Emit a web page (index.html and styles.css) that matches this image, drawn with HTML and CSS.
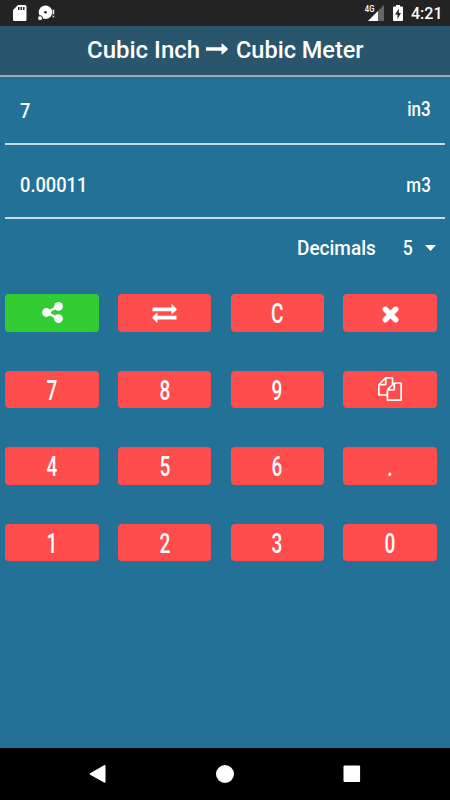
FILE: index.html
```html
<!DOCTYPE html>
<html lang="en">
<head>
  <meta charset="UTF-8" />
  <meta name="viewport" content="width=device-width, initial-scale=1.0" />
  <title>Cubic Inch to Cubic Meter</title>
  <link rel="stylesheet" href="styles.css">
</head>
<body>
  <div class="status-bar">
    <svg class="sd-icon" width="14" height="17" viewBox="0 0 14 17">
      <path fill="#fff" fill-rule="evenodd" d="M5 0h7q1.500 0 1.500 1.500v13q0 1.500-1.500 1.500H1.500Q0 16 0 14.500V5zM5 2v3h1.500V2zm2.500 0v3H9V2zM10 2v3h1.500V2z"/>
    </svg>
    <svg class="disc-icon" width="18" height="17" viewBox="0 0 18 17">
      <circle cx="7.500" cy="7.300" r="6.800" fill="#fff"/>
      <circle cx="7.500" cy="7.300" r="1.300" fill="#232323"/>
      <circle cx="2" cy="13.200" r="2.500" fill="#fff" stroke="#232323" stroke-width="1"/>
      <path fill="#fff" stroke="#232323" stroke-width=".500" d="M14.400 4.500h1.900v5h-1.900zM14.400 10.500h1.900v1.900h-1.900z"/>
    </svg>
    <div class="status-right">
      <span class="network">4G</span>
      <svg class="signal-icon" width="16" height="16" viewBox="0 0 16 16">
        <path fill="#666" d="M16 0v16H0z"/>
        <path fill="#fff" d="M10 6v10H0z"/>
      </svg>
      <svg class="battery-icon" width="10" height="16" viewBox="0 0 10 16">
        <path fill="#fff" d="M3 0h4v1.500h2q1 0 1 1V15q0 1-1 1H1q-1 0-1-1V2.500q0-1 1-1h2z"/>
        <path fill="#232323" d="M6 3.500L2 9.500h2.500V14L8 8H5.700z"/>
      </svg>
      <span class="clock">4:21</span>
    </div>
  </div>

  <header class="title-bar">
    <span class="title-from">Cubic Inch</span>
    <svg class="title-arrow" width="22" height="12" viewBox="0 0 22 12">
      <path fill="#fff" d="M0 4.300h15.500V1.200q0-1.200 1-.400l5 4.500q.700.700 0 1.400l-5 4.500q-1 .800-1-.400V7.700H0z"/>
    </svg>
    <span class="title-to">Cubic Meter</span>
  </header>

  <main>
    <div class="field field-from">
      <span class="value">7</span>
      <span class="unit unit-from">in3</span>
    </div>
    <div class="field field-to">
      <span class="value">0.00011</span>
      <span class="unit unit-to">m3</span>
    </div>

    <div class="decimals">
      <span class="decimals-label">Decimals</span>
      <span class="decimals-value">5</span>
      <svg width="11" height="6" viewBox="0 0 11 6"><path fill="#fff" d="M0 0h11L5.500 6z"/></svg>
    </div>

    <div class="keypad">
      <button class="key share" aria-label="Share">
        <svg width="21" height="21" viewBox="0 0 21 21">
          <path fill="none" stroke="#fff" stroke-width="2.600" d="M16.500 4.300l-12 6.200 12 6.200"/>
          <g fill="#fff"><circle cx="16.500" cy="4.400" r="4.400"/><circle cx="4.400" cy="10.500" r="4.400"/><circle cx="16.500" cy="16.600" r="4.400"/></g>
        </svg>
      </button>
      <button class="key" aria-label="Swap">
        <svg class="swap-icon" width="25" height="19" viewBox="0 0 25 19">
          <path fill="#fff" d="M.500 3.400h19V.800q0-.900.800-.300l4.200 4.200q.500.600 0 1.200l-4.200 4.200q-.800.600-.800-.300V7.300H.500zM24.500 11.700h-19V9.100q0-.900-.800-.300L.500 13q-.500.600 0 1.200l4.200 4.200q.800.600.800-.300v-2.500h19z"/>
        </svg>
      </button>
      <button class="key"><span>C</span></button>
      <button class="key" aria-label="Delete">
        <svg class="delete-icon" width="17" height="17" viewBox="0 0 17 17">
          <path stroke="#fff" stroke-width="5.500" stroke-linecap="round" d="M3.300 3.300l10.400 10.400M13.700 3.300L3.300 13.700"/>
        </svg>
      </button>
      <button class="key"><span>7</span></button>
      <button class="key"><span>8</span></button>
      <button class="key"><span>9</span></button>
      <button class="key" aria-label="Copy">
        <svg width="24" height="24" viewBox="0 0 1792 1792">
          <path fill="#fff" d="M1696 384q40 0 68 28t28 68v1216q0 40-28 68t-68 28h-960q-40 0-68-28t-28-68v-288h-544q-40 0-68-28t-28-68v-672q0-40 20-88t48-76l408-408q28-28 76-48t88-20h416q40 0 68 28t28 68v328q68-40 128-40h416zm-544 213l-299 299h299v-299zm-640-384l-299 299h299v-299zm196 647l316-316v-416h-384v416q0 40-28 68t-68 28h-416v640h512v-256q0-40 20-88t48-76zm956 804v-1152h-384v416q0 40-28 68t-68 28h-416v640h896z"/>
        </svg>
      </button>
      <button class="key"><span>4</span></button>
      <button class="key"><span>5</span></button>
      <button class="key"><span>6</span></button>
      <button class="key"><span>.</span></button>
      <button class="key"><span>1</span></button>
      <button class="key"><span>2</span></button>
      <button class="key"><span>3</span></button>
      <button class="key"><span>0</span></button>
    </div>
  </main>

  <nav class="nav-bar">
    <svg width="18" height="18" viewBox="0 0 18 18"><path fill="#fff" d="M15.500 0q1 0 1 1v16q0 1-1 .800L1.200 9.700q-1-.700 0-1.400z"/></svg>
    <svg width="18" height="18" viewBox="0 0 18 18"><circle cx="9" cy="9" r="9" fill="#fff"/></svg>
    <svg width="18" height="18" viewBox="0 0 18 18"><rect x=".500" y=".500" width="16.600" height="16.600" rx="1" fill="#fff"/></svg>
  </nav>
</body>
</html>
```

FILE: styles.css
```css
* {
  box-sizing: border-box;
}
body {
  margin: 0;
  height: 800px;
  display: flex;
  flex-direction: column;
  overflow: hidden;
  background-color: #237196;
  color: white;
  font-family: Roboto, sans-serif;
}
svg {
  display: block;
  flex: none;
}
.status-bar {
  height: 26px;
  display: flex;
  align-items: flex-start;
  padding: 5px 9px 0 13px;
  background-color: #232323;
}
.disc-icon {
  margin-left: 11px;
}
.status-right {
  display: flex;
  margin-left: auto;
}
.network {
  font-size: 9px;
  line-height: 9px;
  margin-right: -7px;
  z-index: 1;
  font-weight: 500;
  transform: scaleX(0.85);
}
.battery-icon {
  margin-left: 9px;
}
.clock {
  font-size: 16px;
  line-height: 18px;
  margin-left: 8px;
  width: 30px;
  font-weight: 500;
}
.title-bar {
  height: 51px;
  display: flex;
  align-items: center;
  padding: 0 0 2px 87px;
  background-color: #2a566d;
  border-bottom: 2px solid #9eabb2;
  font-size: 24px;
  font-weight: 500;
  white-space: nowrap;
}
.title-from {
  width: 112px;
}
.title-arrow {
  margin: -2px 8px 0 7px;
}
.title-to {
  transform: scaleX(0.98);
  transform-origin: left;
}
main {
  flex: 1;
}
.field {
  display: flex;
  align-items: center;
  justify-content: space-between;
  margin: 0 5px;
  padding: 0 14px 0 15px;
  border-bottom: 2px solid #c9dae2;
}
.field-from {
  height: 68px;
}
.field-to {
  height: 74px;
  padding-top: 7px;
}
.value {
  font-size: 21px;
  transform: scaleX(0.87);
  transform-origin: left;
  font-weight: 500;
}
.field-from .value {
  padding-top: 2px;
}
.unit {
  font-size: 20px;
  font-weight: 500;
  transform: scaleX(0.85);
  transform-origin: right;
}
.field-from .unit {
  margin-top: -2px;
}
.decimals {
  height: 58px;
  display: flex;
  align-items: center;
  justify-content: flex-end;
  padding-right: 14px;
  font-size: 20px;
  font-weight: 500;
}
.decimals-label {
  width: 79px;
  transform: scaleX(0.95);
  transform-origin: left;
}
.decimals-value {
  width: 11px;
  margin: 0 12px 0 26px;
  transform: scaleX(0.88);
}
.keypad {
  display: grid;
  grid-template-columns: repeat(4, 93.3px);
  grid-auto-rows: 37.5px;
  gap: 39.1px 19.400px;
  padding: 17px 0 0 5.400px;
}
.key {
  display: flex;
  align-items: center;
  justify-content: center;
  padding: 0;
  border: none;
  border-radius: 4px;
  background-color: #ff4d4d;
  color: white;
  font-family: Roboto, sans-serif;
  font-size: 28px;
  font-weight: 500;
  line-height: 37px;
}
.key span {
  transform: translateY(1px) scaleX(0.68);
}
.share {
  background-color: #32cd32;
}
.swap-icon {
  margin-top: 2px;
}
.delete-icon {
  margin-top: 3px;
}
.nav-bar {
  height: 52px;
  display: flex;
  align-items: center;
  justify-content: space-between;
  padding: 0 89px;
  background-color: black;
}
```
